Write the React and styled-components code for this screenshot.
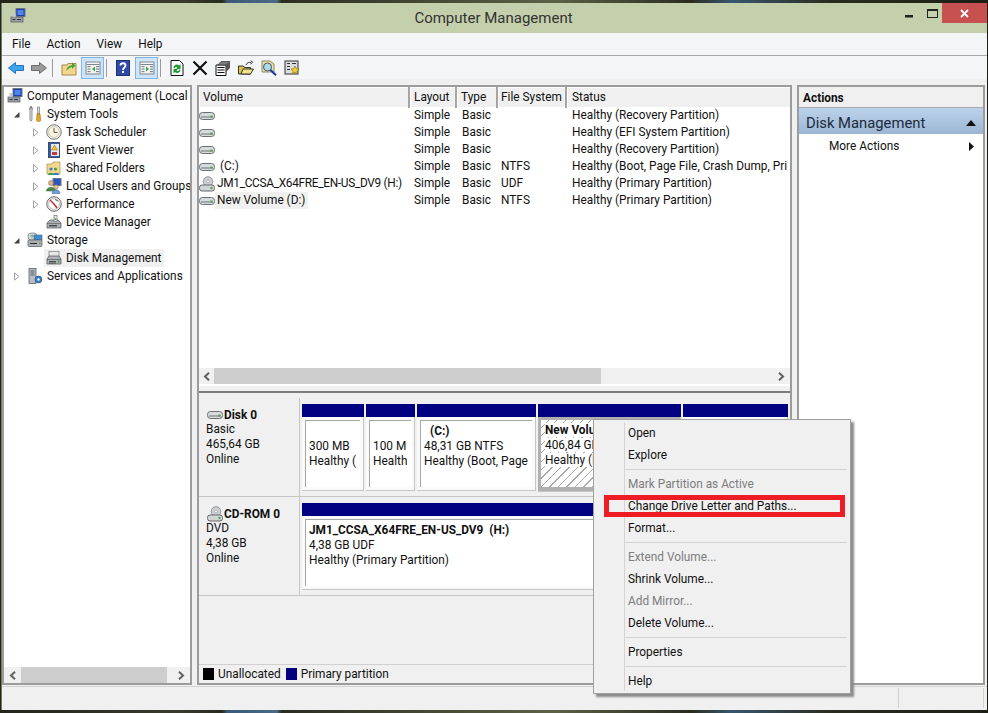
import React from 'react';
import styled, { createGlobalStyle } from 'styled-components';

const FONT = 'Roboto, "Noto Sans", "Liberation Sans", sans-serif';

const Global = createGlobalStyle`
  html, body { margin: 0; padding: 0; background: #2c2d22; }
  * { box-sizing: border-box; }
`;

const Desktop = styled.div`
  width: 988px;
  height: 713px;
  padding: 3px 1px 3px 1px;
  position: relative;
  overflow: hidden;
  font-family: ${FONT};
  font-size: 11.85px;
  color: #111;
  background: linear-gradient(90deg, #23241b 0%, #3a3b2c 18%, #2a2b20 22.500%, #3b5a78 23%, #4a6a88 28%, #2b2c20 28.500%, #5c6146 56%, #2b2c20 70%, #38566e 74%, #2b2c20 84%, #1d1e16 100%);
`;

const Win = styled.div`
  height: 100%;
  display: flex;
  flex-direction: column;
  border-left: 1px solid #6f7a60;
  background: #f0f0f0;
`;

const TitleBar = styled.div`
  height: 30px;
  flex: none;
  display: grid;
  grid-template-columns: 1fr auto 1fr;
  background: #c4d0ab;
`;

const TitleIcon = styled.div`
  padding: 5px 0 0 8px;
`;

const TitleText = styled.div`
  font-size: 15px;
  line-height: 30px;
  color: #333;
  margin-left: -2px;
`;

const Controls = styled.div`
  display: flex;
  justify-content: flex-end;
  align-items: flex-start;
`;

const CtlBtn = styled.div`
  height: 20px;
  width: ${p => p.$w}px;
  display: flex;
  align-items: center;
  justify-content: center;
  background: ${p => (p.$close ? '#c75050' : 'transparent')};
`;

const MenuBar = styled.div`
  height: 23px;
  flex: none;
  display: flex;
  gap: 16px;
  padding-left: 10px;
  line-height: 22px;
  background: #f4f5f7;
  border-bottom: 1px solid #a9a9a9;
`;

const ToolBar = styled.div`
  height: 23px;
  flex: none;
  display: flex;
  align-items: flex-end;
  padding-left: 2px;
  background: #f4f5f7;
`;

const ToolBtn = styled.div`
  width: 23px;
  height: 22px;
  flex: none;
  display: flex;
  align-items: center;
  justify-content: center;
  ${p => p.$active && 'margin-left: 1px; background: #cfe4f8; border: 1px solid #7fb4e6;'}
`;

const ToolSep = styled.div`
  width: 1px;
  height: 18px;
  margin: 0 4px 2px 2px;
  background: #9a9a9a;
`;

const Body = styled.div`
  flex: 1;
  min-height: 0;
  display: flex;
  gap: 5px;
  padding: 6px 2px 0 0;
`;

const Pane = styled.div`
  width: ${p => p.$w}px;
  height: 600px;
  flex: none;
  display: flex;
  flex-direction: column;
  border: 2px solid #9c9c9c;
  background: #fff;
`;

const TreeList = styled.div`
  flex: 1;
  padding: 0 0 0 3px;
  overflow: hidden;
`;

const TreeRow = styled.div`
  height: 18px;
  display: flex;
  align-items: center;
  white-space: nowrap;
  padding-left: ${p => (p.$level ? (p.$level - 1) * 19 + 5 : 0)}px;
`;

const Twisty = styled.div`
  width: 9px;
  height: 18px;
  flex: none;
  display: flex;
  align-items: center;
  justify-content: center;
`;

const TreeLabel = styled.div`
  display: flex;
  align-items: center;
  gap: 4px;
  height: 18px;
  padding: 0 2px;
  margin-left: ${p => (p.$root ? -2 : 4)}px;
  background: ${p => (p.$selected ? '#f0f0f0' : 'transparent')};
`;

const Scroll = styled.div`
  height: ${p => p.$h}px;
  flex: none;
  display: flex;
  align-items: stretch;
  background: #f0f0f0;
`;

const ScrollBtn = styled.div`
  width: ${p => p.$w}px;
  flex: none;
  display: flex;
  align-items: center;
  justify-content: center;
`;

const ScrollThumb = styled.div`
  width: ${p => p.$w}px;
  flex: none;
  background: #cdcdcd;
`;

const ScrollGap = styled.div`
  flex: 1;
`;

const ListArea = styled.div`
  height: 306px;
  flex: none;
  display: flex;
  flex-direction: column;
  border-bottom: 2px solid #7d7d7d;
`;

const VolumeGrid = styled.div`
  flex: 1;
  overflow: hidden;
`;

const VolumeHeader = styled.div`
  display: grid;
  grid-template-columns: 211px 47px 41px 69px 1fr;
  height: 20px;
  background: #f0f0f0;
`;

const HeadCell = styled.div`
  padding-left: ${p => p.$pad}px;
  line-height: 21px;
  white-space: nowrap;
  border-right: 2px solid #a5a5a5;
  box-shadow: inset 1px 1px 0 #fff;
  &:last-child { border-right: 0; }
`;

const VolumeRow = styled.div`
  display: grid;
  grid-template-columns: 211px 47px 41px 69px 1fr;
  height: 17px;
  line-height: 17px;
  white-space: nowrap;
`;

const VolName = styled.div`
  display: flex;
  align-items: center;
`;

const VolText = styled.span`
  margin-left: ${p => p.$indent}px;
  padding: 0 3px 0 2px;
  letter-spacing: ${p => (p.$tight ? '-0.3px' : 'normal')};
  background: ${p => (p.$selected ? '#f0f0f0' : 'transparent')};
`;

const VolCell = styled.div`
  padding-left: ${p => p.$pad}px;
  overflow: hidden;
`;

const ScrollTail = styled.div`
  height: 7px;
  flex: none;
  background: #f0f0f0;
  border-top: 2px solid #fff;
`;

const DiskArea = styled.div`
  flex: 1;
  display: flex;
  flex-direction: column;
  padding-top: 5px;
  background: #f0f0f0;
`;

const DiskRow = styled.div`
  height: ${p => p.$h}px;
  flex: none;
  display: flex;
  ${p => p.$second && 'border-top: 1px solid #c6c6c6;'}
  ${p => p.$second && 'border-bottom: 1px solid #c6c6c6;'}
`;

const DiskLabel = styled.div`
  width: 101px;
  flex: none;
  padding: 10px 0 0 7px;
  line-height: 15px;
  border-right: 1px solid #c6c6c6;
`;

const DiskName = styled.div`
  display: flex;
  align-items: center;
  font-weight: 700;
  gap: 1px;
  margin-left: 1px;
  height: 14px;
`;

const DiskStrip = styled.div`
  flex: 1;
  display: flex;
  gap: 2px;
  padding: 6px 0 0 2px;
`;

const Partition = styled.div`
  width: ${p => p.$w}px;
  flex: none;
  display: flex;
  flex-direction: column;
`;

const PartBar = styled.div`
  height: 13px;
  flex: none;
  background: #000080;
`;

const PartFrame = styled.div`
  height: ${p => (p.$selected ? 75 : 74)}px;
  padding: 3px;
  background: ${p => (p.$selected ? '#b0b0b0' : '#fafafa')};
  border-right: 1px solid #c6c6c6;
  border-bottom: 1px solid #c6c6c6;
`;

const PartBox = styled.div`
  height: 67px;
  padding: 3px 4px 0 ${p => (p.$selected ? 4 : 3)}px;
  line-height: 15px;
  white-space: nowrap;
  border-top: ${p => (p.$selected ? 0 : '1px solid #a8a8a8')};
  border-left: ${p => (p.$selected ? 0 : '1px solid #a8a8a8')};
  background: ${p =>
    p.$selected
      ? 'repeating-linear-gradient(135deg, #fff 0 5px, #a9a9a9 5px 6px)'
      : '#fff'};
`;

const PartClip = styled.div`
  overflow: hidden;
`;

const PartTitle = styled.div`
  font-weight: 700;
  height: 15px;
  padding-left: ${p => p.$indent || 0}px;
`;

const PartLine = styled.div`
  height: 15px;
`;

const HatchText = styled.span`
  background: #fff;
`;

const Spacer = styled.div`
  flex: 1;
`;

const Legend = styled.div`
  height: 19px;
  flex: none;
  display: flex;
  align-items: center;
  padding-left: 4px;
  border-top: 1px solid #d0d0d0;
`;

const LegendSwatch = styled.div`
  width: 11px;
  height: 12px;
  margin-right: 4px;
  background: ${p => p.$color};
`;

const LegendText = styled.div`
  margin-right: 5px;
`;

const ActionsTitle = styled.div`
  height: 21px;
  flex: none;
  padding-left: 4px;
  line-height: 22px;
  font-weight: 700;
  background: #f0f0f0;
  border-bottom: 1px solid #a9a9a9;
`;

const ActionsHead = styled.div`
  height: 26px;
  flex: none;
  display: flex;
  align-items: center;
  justify-content: space-between;
  padding: 3px 7px 0 7px;
  font-size: 14.800px;
  color: #1c2b3c;
  background: linear-gradient(#bcd3eb, #9bb5d3);
`;

const ActionsItem = styled.div`
  height: 24px;
  flex: none;
  display: flex;
  align-items: center;
  justify-content: space-between;
  padding: 0 9px 0 30px;
`;

const StatusBar = styled.div`
  height: 24px;
  margin-top: auto;
  flex: none;
  display: flex;
  justify-content: flex-end;
  padding: 1px 3px 2px 0;
  border-top: 1px solid #d4d4d4;
`;

const StatusCell = styled.div`
  width: ${p => p.$w}px;
  border-left: 1px solid #d0d0d0;
  border-right: 1px solid #d0d0d0;
`;

const ContextMenu = styled.div`
  position: absolute;
  left: 593px;
  top: 419px;
  width: 258px;
  height: 275px;
  padding: 2px 1px 0 1px;
  background: #f0f0f0;
  border: 1px solid #a0a0a0;
  box-shadow: 3px 3px 2px #8a8a8a;
`;

const MenuGutter = styled.div`
  position: absolute;
  left: 30px;
  top: 2px;
  bottom: 2px;
  width: 1px;
  background: #d4d4d4;
`;

const MenuItem = styled.div`
  height: 22px;
  line-height: 22px;
  padding-left: 33px;
  color: ${p => (p.$disabled ? '#7d7d7d' : '#111')};
`;

const MenuSep = styled.div`
  height: 1px;
  margin: 3px 2px 3px 30px;
  background: #d4d4d4;
`;

const RedBox = styled.div`
  position: absolute;
  left: 10px;
  top: 75px;
  width: 241px;
  height: 22px;
  border: 5px solid #ee1c25;
`;

/* icons */
const Svg = ({ s = 16, children }) => (
  <svg width={s} height={s} viewBox="0 0 16 16" style={{ flex: 'none', display: 'block' }}>{children}</svg>
);

const IcoComputer = () => (
  <Svg>
    <rect x="6" y="0.5" width="9" height="8" fill="#1c3fb0" stroke="#6c7686" />
    <rect x="7.5" y="2" width="6" height="5" fill="#4f86ee" />
    <rect x="1" y="9" width="12" height="5" fill="#9aa1a8" stroke="#5a6068" strokeWidth=".8" />
    <path d="M2.500 11.500h3M7 11.500h4" stroke="#333" />
    <rect x="2.500" y="5" width="3" height="4" fill="#c3c7cc" />
  </Svg>
);
const IcoTools = () => (
  <Svg>
    <path d="M4 .5c-2 1-2 3-1 4v9c0 2 2 2 2 0v-9c1-1 1-3-1-4v3H4z" fill="#dfe2e5" stroke="#666" strokeWidth=".7" />
    <path d="M10.500 1h2v7h-2z" fill="#d8dbde" stroke="#666" strokeWidth=".6" />
    <path d="M10 8h3l.6 6.500c-.2 1.200-3.800 1.200-4 0z" fill="#e7a81c" stroke="#8b6510" strokeWidth=".6" />
  </Svg>
);
const IcoClock = () => (
  <Svg>
    <circle cx="8" cy="8" r="7.300" fill="#eee" stroke="#7b7b7b" />
    <circle cx="8" cy="8" r="5.400" fill="#fbf6de" stroke="#b7b08a" strokeWidth=".6" />
    <path d="M8 4v4.400h3.500" fill="none" stroke="#555" strokeWidth="1" />
  </Svg>
);
const IcoEvent = () => (
  <Svg>
    <rect x="2.500" y=".5" width="11" height="15" fill="#3c5ca8" stroke="#3a4a6a" />
    <rect x="5" y="2" width="8" height="12" fill="#e8eaf2" />
    <path d="M8.500 3 11.500 8h-6z" fill="#f4c430" stroke="#8a6a10" strokeWidth=".5" />
    <rect x="6" y="10" width="5" height="3" fill="#c23a3a" />
  </Svg>
);
const IcoShared = () => (
  <Svg>
    <path d="M1 4h5l1-2h7v12H1z" fill="#f2d88c" stroke="#a88f4e" strokeWidth=".7" />
    <circle cx="5" cy="9" r="1.600" fill="#3c78c8" />
    <path d="M2 15c0-3 6-3 6 0z" fill="#3c9a52" />
    <circle cx="9.500" cy="9" r="1.600" fill="#4c9a4c" />
    <path d="M7 15c0-3 6-3 6 0z" fill="#3c78c8" />
  </Svg>
);
const IcoUsers = () => (
  <Svg>
    <rect x="7" y=".5" width="8" height="7" fill="#2d55c0" stroke="#6c7686" />
    <circle cx="5" cy="5" r="2.500" fill="#dcb48c" stroke="#7a5a3a" strokeWidth=".5" />
    <path d="M.5 13c0-5 9-5 9 0z" fill="#4f8a4f" stroke="#2f5a2f" strokeWidth=".5" />
    <circle cx="10" cy="9" r="2.200" fill="#e4c4a0" stroke="#7a5a3a" strokeWidth=".5" />
    <path d="M6 15.500c0-5 8-5 8 0z" fill="#6f9ed8" stroke="#3a5a8a" strokeWidth=".5" />
  </Svg>
);
const IcoPerf = () => (
  <Svg>
    <circle cx="8" cy="8" r="7.300" fill="#e4e4e4" stroke="#6f6f6f" />
    <circle cx="8" cy="8" r="5.300" fill="#fff" stroke="#999" strokeWidth=".5" />
    <path d="M4 4 8 8 11 12" fill="none" stroke="#c62020" strokeWidth="1.300" />
    <path d="M9 3.500 12 5" stroke="#333" strokeWidth=".8" />
  </Svg>
);
const IcoDevice = () => (
  <Svg>
    <path d="M1 9 4 6h8l3 3v5H1z" fill="#aab0b6" stroke="#555" strokeWidth=".7" />
    <path d="M1 9.500h14" stroke="#555" strokeWidth=".6" />
    <rect x="3" y="11" width="8" height="1.400" fill="#444" />
    <rect x="8" y="1.500" width="3" height="6" fill="#e4e4e4" stroke="#666" strokeWidth=".6" />
    <circle cx="9.500" cy="5" r="1" fill="#4aa84a" />
  </Svg>
);
const IcoStorage = () => (
  <Svg>
    <rect x="1" y="1" width="9" height="7" rx="3" fill="#d3d6d8" stroke="#777" strokeWidth=".7" />
    <circle cx="5" cy="4" r="1.600" fill="#89b89a" />
    <rect x="7" y="3" width="8" height="5" fill="#3c8fd0" stroke="#48657a" strokeWidth=".6" />
    <rect x="1" y="8" width="14" height="6.500" rx="1" fill="#aeb4b9" stroke="#555" strokeWidth=".7" />
    <path d="M3 11.500h7" stroke="#333" strokeWidth="1.200" />
    <rect x="12" y="10.500" width="1.600" height="1.600" fill="#4aa84a" />
  </Svg>
);
const IcoDiskMgmt = () => (
  <Svg>
    <rect x="3" y="1.500" width="10" height="5" fill="#e8e8e8" stroke="#666" strokeWidth=".6" />
    <path d="M1 9l2-3h10l2 3v5H1z" fill="#aeb3b8" stroke="#4d4d4d" strokeWidth=".7" />
    <path d="M1 9.500h14" stroke="#444" strokeWidth=".6" />
    <path d="M3 11.500h7M3 13h7" stroke="#333" strokeWidth=".8" />
    <rect x="11.500" y="10.500" width="2" height="2" fill="#4aa84a" />
  </Svg>
);
const IcoServices = () => (
  <Svg>
    <rect x="2" y=".5" width="7" height="15" fill="#b6bcc4" stroke="#59606a" strokeWidth=".8" />
    <path d="M3.500 3h4M3.500 5h4M3.500 7h4" stroke="#444" strokeWidth=".8" />
    <circle cx="11.500" cy="11.500" r="3.400" fill="#3f79c4" stroke="#24508c" strokeWidth=".7" />
    <circle cx="11.500" cy="11.500" r="1.200" fill="#fff" />
  </Svg>
);
const IcoHdd = () => (
  <Svg>
    <rect x=".5" y="4.500" width="15" height="7" rx="3" fill="#d8dbdd" stroke="#6b6f72" />
    <path d="M2 9h12" stroke="#8f9396" strokeWidth="1.400" />
    <rect x="11.500" y="7.500" width="2" height="2" fill="#3ea83e" />
  </Svg>
);
const IcoCd = () => (
  <Svg>
    <circle cx="9" cy="5.500" r="4.800" fill="#ccd0d4" stroke="#777" strokeWidth=".7" />
    <circle cx="9" cy="5.500" r="1.300" fill="#fff" stroke="#888" strokeWidth=".5" />
    <rect x=".5" y="9" width="15" height="6" rx="2.500" fill="#d2d5d8" stroke="#666" />
    <rect x="11.500" y="11" width="2" height="2" fill="#3ea83e" />
  </Svg>
);
const IcoBack = ({ color, line, flip }) => (
  <Svg>
    <path d={flip ? 'M15.500 8 8.500 2.500V5.500H.5V10.500H8.500V13.500Z' : 'M.5 8 7.500 2.500V5.500H15.500V10.500H7.500V13.500Z'} fill={color} stroke={line} />
  </Svg>
);
const IcoUp = () => (
  <Svg>
    <path d="M1 5h5l1-1.500h8V15H1z" fill="#f3d58c" stroke="#a6894a" />
    <path d="M5 11C6 7 8 6 11 5V2.500L14.500 5.500 11 9V7C9 7.500 7 9 5 11z" fill="#3da53d" />
  </Svg>
);
const IcoPanel = ({ arrow, flip }) => (
  <Svg>
    <rect x="1" y="2" width="14" height="12" fill="#f4f4f4" stroke="#7d8791" />
    <path d="M1.500 4.500h13" stroke="#7d8791" />
    <rect x="2.500" y="6" width="3" height="1.200" fill="#7d8791" />
    <rect x="2.500" y="8.500" width="3" height="1.200" fill="#7d8791" />
    <rect x="2.500" y="11" width="3" height="1.200" fill="#7d8791" />
    <rect x="11" y="6" width="3" height="1.200" fill="#7d8791" />
    <rect x="11" y="8.500" width="3" height="1.200" fill="#7d8791" />
    <rect x="11" y="11" width="3" height="1.200" fill="#7d8791" />
    <path d={flip ? 'M7 6.500 10 9 7 11.500z' : 'M10 6.500 7 9 10 11.500z'} fill={arrow} />
  </Svg>
);
const IcoHelp = () => (
  <svg width="14" height="16" viewBox="0 0 14 16" style={{ display: 'block' }}>
    <rect x=".5" y=".5" width="13" height="15" fill="#2f4aa8" stroke="#1e2f74" />
    <path d="M4.500 5.500C4.500 2.500 9.500 2.500 9.500 5.500 9.500 7.500 7 7.500 7 10" fill="none" stroke="#fff" strokeWidth="1.800" />
    <rect x="6" y="11" width="2" height="2" fill="#fff" />
  </svg>
);
const IcoRefresh = () => (
  <Svg>
    <path d="M2 .5h8.500l3.500 3.500v11.500H2z" fill="#fff" stroke="#111" />
    <path d="M4.500 8C4.500 5 8 3.500 10 5.500L11.500 4v5H7L8.500 7.500C7.500 6.500 6 7 5.500 8.500z" fill="#1d9a2d" />
    <path d="M11.500 9.500C11.500 12.500 8 14 6 12L4.500 13.500V9H9L7.500 10.500C8.500 11.500 10 11 10.500 9.500z" fill="#1d9a2d" />
  </Svg>
);
const IcoX = () => (
  <Svg>
    <path d="M1.500 1.500 14.500 14.500M14.500 1.500 1.500 14.500" stroke="#111" strokeWidth="2.200" />
  </Svg>
);
const IcoProps = () => (
  <Svg>
    <path d="M1 5h10v10.500H1z" fill="#fff" stroke="#111" />
    <path d="M3 5 6 1.500h9L11 5z" fill="#7d7d7d" stroke="#333" strokeWidth=".7" />
    <path d="M11 5 15 1.500V8l-4 4z" fill="#555" />
    <path d="M2.500 7.500h7M2.500 10h7M2.500 12.500h7" stroke="#111" strokeWidth="1.200" />
  </Svg>
);
const IcoOpen = () => (
  <Svg>
    <path d="M.5 6h5l1 1.500h6V14H.5z" fill="#d8c44a" stroke="#222" strokeWidth=".9" />
    <path d="M3 14 5 9h10.500l-3 5z" fill="#f3e58a" stroke="#222" strokeWidth=".9" />
    <path d="M8 5C9 2.500 11 2 13 2.500M13 .5l1.500 2-2 1.500" fill="none" stroke="#333" strokeWidth="1" />
  </Svg>
);
const IcoSearch = () => (
  <Svg>
    <path d="M1 1h8l4 3v8H1z" fill="#e9dfa8" stroke="#8a8a6a" />
    <circle cx="6.500" cy="7" r="4" fill="#a9dde8" stroke="#556" strokeWidth="1" />
    <path d="M9.500 10 15 15.300" stroke="#2034a8" strokeWidth="2" />
  </Svg>
);
const IcoWizard = () => (
  <Svg>
    <rect x="1" y="1" width="13" height="13" fill="#ddd" stroke="#333" />
    <path d="M3 3.500h3M3 6.500h3M3 9.500h3M8 3.500h4" stroke="#333" strokeWidth="1.200" />
    <path d="M11 6l1.200 2.600L15 9l-2 1.900.5 2.800L11 12.400 8.500 13.700 9 10.900 7 9l2.800-.4z" fill="#f2d22c" stroke="#7a6a10" strokeWidth=".6" />
  </Svg>
);
const ArrowOpen = () => (
  <svg width="7" height="7" viewBox="0 0 7 7"><path d="M6.500 1v5.500H1z" fill="#444" /></svg>
);
const ArrowClosed = () => (
  <svg width="6" height="9" viewBox="0 0 6 9"><path d="M.5.8 5 4.500.5 8.200z" fill="#fff" stroke="#a0a0a0" /></svg>
);
const Chevron = ({ flip }) => (
  <svg width="7" height="9" viewBox="0 0 7 9">
    <path d={flip ? 'M1 .8 5 4.500 1 8.200' : 'M6 .8 2 4.500 6 8.200'} fill="none" stroke="#606060" strokeWidth="2" />
  </svg>
);

const tree = [
  { level: 0, icon: <IcoComputer />, label: 'Computer Management (Local', root: true },
  { level: 1, twisty: 'open', icon: <IcoTools />, label: 'System Tools' },
  { level: 2, twisty: 'closed', icon: <IcoClock />, label: 'Task Scheduler' },
  { level: 2, twisty: 'closed', icon: <IcoEvent />, label: 'Event Viewer' },
  { level: 2, twisty: 'closed', icon: <IcoShared />, label: 'Shared Folders' },
  { level: 2, twisty: 'closed', icon: <IcoUsers />, label: 'Local Users and Groups' },
  { level: 2, twisty: 'closed', icon: <IcoPerf />, label: 'Performance' },
  { level: 2, twisty: 'none', icon: <IcoDevice />, label: 'Device Manager' },
  { level: 1, twisty: 'open', icon: <IcoStorage />, label: 'Storage' },
  { level: 2, twisty: 'none', icon: <IcoDiskMgmt />, label: 'Disk Management', selected: true },
  { level: 1, twisty: 'closed', icon: <IcoServices />, label: 'Services and Applications' },
];

const volumes = [
  { name: '', fs: '', status: 'Healthy (Recovery Partition)' },
  { name: '', fs: '', status: 'Healthy (EFI System Partition)' },
  { name: '', fs: '', status: 'Healthy (Recovery Partition)' },
  { name: '(C:)', indent: 3, fs: 'NTFS', status: 'Healthy (Boot, Page File, Crash Dump, Pri' },
  { name: 'JM1_CCSA_X64FRE_EN-US_DV9 (H:)', cd: true, fs: 'UDF', status: 'Healthy (Primary Partition)' },
  { name: 'New Volume (D:)', selected: true, fs: 'NTFS', status: 'Healthy (Primary Partition)' },
];

const partitions = [
  { w: 62, lines: ['300 MB', 'Healthy ('] },
  { w: 49, lines: ['100 MB', 'Healthy ('] },
  { w: 119, title: '(C:)', indent: 6, lines: ['48,31 GB NTFS', 'Healthy (Boot, Page'] },
  { w: 143, title: 'New Volume (D:)', lines: ['406,84 GB NTFS', 'Healthy (Primary'], selected: true },
  { w: 105, lines: [] },
];

const menu = [
  { label: 'Open' }, { label: 'Explore' }, { sep: true },
  { label: 'Mark Partition as Active', disabled: true },
  { label: 'Change Drive Letter and Paths...' }, { label: 'Format...' }, { sep: true },
  { label: 'Extend Volume...', disabled: true }, { label: 'Shrink Volume...' },
  { label: 'Add Mirror...', disabled: true }, { label: 'Delete Volume...' }, { sep: true },
  { label: 'Properties' }, { sep: true }, { label: 'Help' },
];

const App = () => (
  <Desktop>
    <Global />
    <Win>
      <TitleBar>
        <TitleIcon><IcoComputer /></TitleIcon>
        <TitleText>Computer Management</TitleText>
        <Controls>
          <CtlBtn $w={26}>
            <svg width="9" height="9" viewBox="0 0 9 9"><rect y="6" width="8" height="2.500" fill="#222" /></svg>
          </CtlBtn>
          <CtlBtn $w={20}>
            <svg width="11" height="9" viewBox="0 0 11 9"><rect x=".5" y=".5" width="10" height="8" fill="none" stroke="#222" /><rect y="0" width="11" height="2" fill="#222" /></svg>
          </CtlBtn>
          <CtlBtn $w={45} $close>
            <svg width="9" height="9" viewBox="0 0 9 9"><path d="M1 1l7 7M8 1 1 8" stroke="#fff" strokeWidth="1.800" /></svg>
          </CtlBtn>
        </Controls>
      </TitleBar>
      <MenuBar>
        <div>File</div><div>Action</div><div>View</div><div>Help</div>
      </MenuBar>
      <ToolBar>
        <ToolBtn><IcoBack color="#3aa4ee" line="#2a72b8" /></ToolBtn>
        <ToolBtn><IcoBack color="#9a9a9a" line="#6d6d6d" flip /></ToolBtn>
        <ToolSep />
        <ToolBtn><IcoUp /></ToolBtn>
        <ToolBtn $active><IcoPanel arrow="#2fae3f" /></ToolBtn>
        <ToolSep />
        <ToolBtn><IcoHelp /></ToolBtn>
        <ToolBtn $active><IcoPanel arrow="#2fae3f" flip /></ToolBtn>
        <ToolSep />
        <ToolBtn><IcoRefresh /></ToolBtn>
        <ToolBtn><IcoX /></ToolBtn>
        <ToolBtn><IcoProps /></ToolBtn>
        <ToolBtn><IcoOpen /></ToolBtn>
        <ToolBtn><IcoSearch /></ToolBtn>
        <ToolBtn><IcoWizard /></ToolBtn>
      </ToolBar>
      <Body>
        <Pane $w={190}>
          <TreeList>
            {tree.map(t => (
              <TreeRow key={t.label} $level={t.level}>
                {!t.root && (
                  <Twisty>
                    {t.twisty === 'open' && <ArrowOpen />}
                    {t.twisty === 'closed' && <ArrowClosed />}
                  </Twisty>
                )}
                <TreeLabel $selected={t.selected} $root={t.root}>
                  {t.icon}
                  <span>{t.label}</span>
                </TreeLabel>
              </TreeRow>
            ))}
          </TreeList>
          <Scroll $h={16}>
            <ScrollBtn $w={17}><Chevron /></ScrollBtn>
            <ScrollThumb $w={146} />
            <ScrollGap />
            <ScrollBtn $w={17}><Chevron flip /></ScrollBtn>
          </Scroll>
        </Pane>

        <Pane $w={595}>
          <ListArea>
            <VolumeGrid>
              <VolumeHeader>
                <HeadCell $pad={4}>Volume</HeadCell>
                <HeadCell $pad={4}>Layout</HeadCell>
                <HeadCell $pad={4}>Type</HeadCell>
                <HeadCell $pad={3}>File System</HeadCell>
                <HeadCell $pad={5}>Status</HeadCell>
              </VolumeHeader>
              {volumes.map((v, i) => (
                <VolumeRow key={i}>
                  <VolName>
                    {v.cd ? <IcoCd /> : <IcoHdd />}
                    {v.name && <VolText $indent={v.indent || 0} $selected={v.selected} $tight={v.cd}>{v.name}</VolText>}
                  </VolName>
                  <VolCell $pad={4}>Simple</VolCell>
                  <VolCell $pad={5}>Basic</VolCell>
                  <VolCell $pad={3}>{v.fs}</VolCell>
                  <VolCell $pad={5}>{v.status}</VolCell>
                </VolumeRow>
              ))}
            </VolumeGrid>
            <Scroll $h={16}>
              <ScrollBtn $w={15}><Chevron /></ScrollBtn>
              <ScrollThumb $w={387} />
              <ScrollGap />
              <ScrollBtn $w={18}><Chevron flip /></ScrollBtn>
            </Scroll>
            <ScrollTail />
          </ListArea>
          <DiskArea>
            <DiskRow $h={98}>
              <DiskLabel>
                <DiskName><IcoHdd />Disk 0</DiskName>
                <div>Basic</div>
                <div>465,64 GB</div>
                <div>Online</div>
              </DiskLabel>
              <DiskStrip>
                {partitions.map((p, i) => (
                  <Partition key={i} $w={p.w}>
                    <PartBar />
                    <PartFrame $selected={p.selected}>
                      <PartBox $selected={p.selected}>
                        <PartClip>
                          <PartTitle $indent={p.indent}>
                            {p.selected ? <HatchText>{p.title}</HatchText> : p.title}
                          </PartTitle>
                          {p.lines.map(l => (
                            <PartLine key={l}>{p.selected ? <HatchText>{l}</HatchText> : l}</PartLine>
                          ))}
                        </PartClip>
                      </PartBox>
                    </PartFrame>
                  </Partition>
                ))}
              </DiskStrip>
            </DiskRow>
            <DiskRow $h={100} $second>
              <DiskLabel>
                <DiskName><IcoCd />CD-ROM 0</DiskName>
                <div>DVD</div>
                <div>4,38 GB</div>
                <div>Online</div>
              </DiskLabel>
              <DiskStrip>
                <Partition $w={486}>
                  <PartBar />
                  <PartFrame>
                    <PartBox>
                      <PartClip>
                        <PartTitle>JM1_CCSA_X64FRE_EN-US_DV9&nbsp; (H:)</PartTitle>
                        <PartLine>4,38 GB UDF</PartLine>
                        <PartLine>Healthy (Primary Partition)</PartLine>
                      </PartClip>
                    </PartBox>
                  </PartFrame>
                </Partition>
              </DiskStrip>
            </DiskRow>
            <Spacer />
            <Legend>
              <LegendSwatch $color="#000" />
              <LegendText>Unallocated</LegendText>
              <LegendSwatch $color="#000080" />
              <LegendText>Primary partition</LegendText>
            </Legend>
          </DiskArea>
        </Pane>

        <Pane $w={188}>
          <ActionsTitle>Actions</ActionsTitle>
          <ActionsHead>
            Disk Management
            <svg width="10" height="6" viewBox="0 0 10 6"><path d="M5 0 10 6H0z" fill="#111" /></svg>
          </ActionsHead>
          <ActionsItem>
            More Actions
            <svg width="5" height="9" viewBox="0 0 5 9"><path d="M0 0 5 4.500 0 9z" fill="#111" /></svg>
          </ActionsItem>
        </Pane>
      </Body>
      <StatusBar>
        <StatusCell $w={86} />
      </StatusBar>
    </Win>

    <ContextMenu>
      <MenuGutter />
      {menu.map((m, i) =>
        m.sep ? <MenuSep key={i} /> : <MenuItem key={i} $disabled={m.disabled}>{m.label}</MenuItem>
      )}
      <RedBox />
    </ContextMenu>
  </Desktop>
);

export default App;
